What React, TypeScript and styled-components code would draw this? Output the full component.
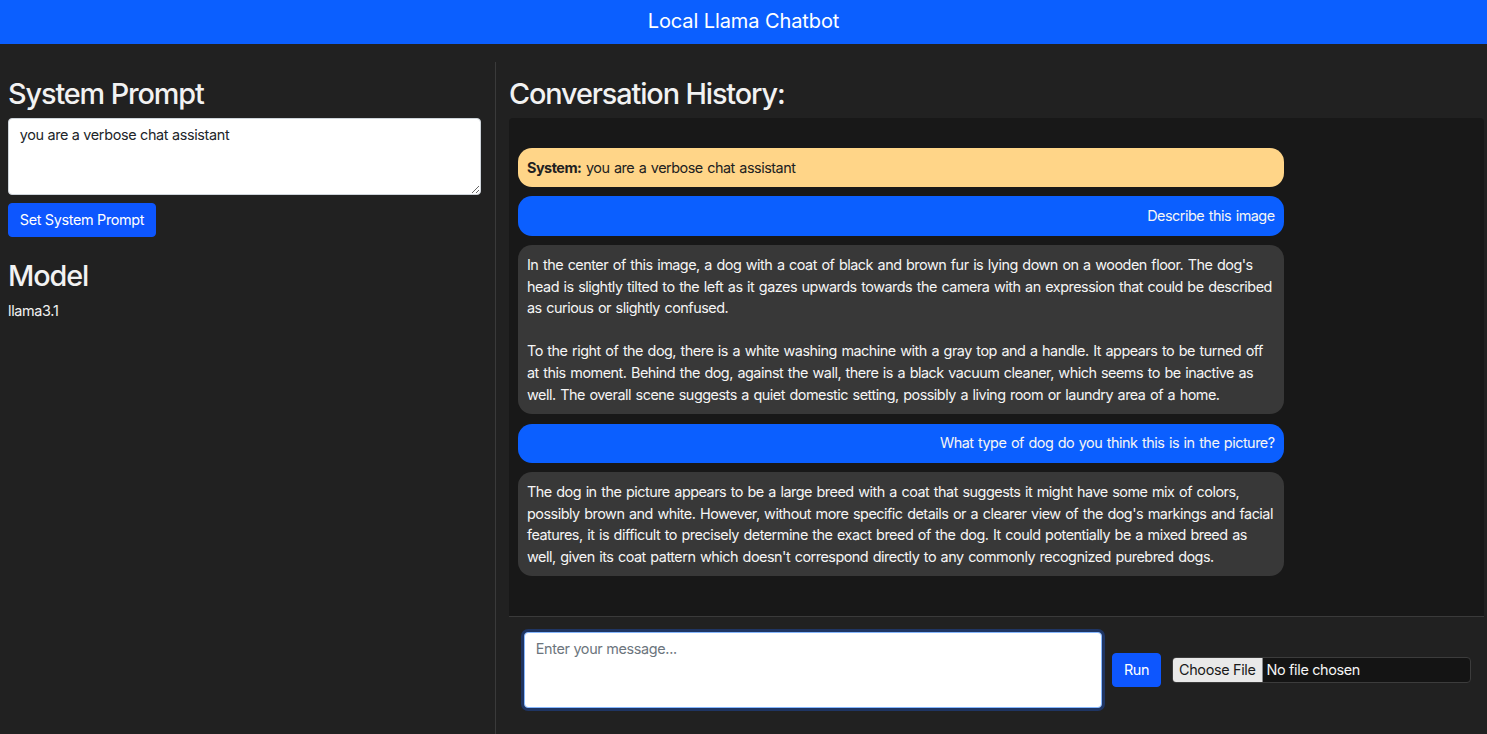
import React from "react";
import styled, { createGlobalStyle } from "styled-components";

const GlobalStyle = createGlobalStyle`
  html, body { margin: 0; padding: 0; }
  body {
    background: #212121;
    color: #f2f2f2;
    font-family: Inter, "Noto Sans", "Liberation Sans", sans-serif;
    font-size: 14.4px;
    line-height: 1.5;
    letter-spacing: -0.33px;
    overflow: hidden;
  }
  * { box-sizing: border-box; }
`;

const Header = styled.header`
  height: 44px;
  padding-bottom: 3px;
  background: #0b5fff;
  color: #ffffff;
  display: flex;
  align-items: center;
  justify-content: center;
  font-size: 20px;
  letter-spacing: -0.1px;
  font-weight: 400;
`;

const Main = styled.main`
  display: grid;
  grid-template-columns: 496px 1fr;
  height: calc(100vh - 44px);
  padding-top: 18px;
`;

const Sidebar = styled.aside`
  border-right: 1px solid #3a3a3a;
  padding: 14px 14px 0 8px;
`;

const Content = styled.section`
  display: flex;
  flex-direction: column;
  padding: 14px 3px 0 13px;
  min-height: 0;
`;

const Heading = styled.h2`
  margin: 0 0 7.2px;
  padding-top: 1px;
  height: 34.6px;
  font-size: 28.8px;
  line-height: 1.2;
  font-weight: 500;
  letter-spacing: -1.1px;
  color: #f2f2f2;
`;

const ModelHeading = styled(Heading)`
  margin-top: 21px;
`;

const PromptArea = styled.textarea`
  display: block;
  width: 100%;
  height: 77px;
  padding: 5.4px 10.8px;
  border: 1px solid #ced4da;
  border-radius: 4px;
  background: #ffffff;
  color: #212529;
  font: inherit;
  letter-spacing: inherit;
  resize: vertical;
  outline: none;
`;

const PrimaryButton = styled.button`
  display: inline-block;
  height: 34px;
  padding: 0 10.8px;
  border: 1px solid #0d56fe;
  border-radius: 4px;
  background: #0d56fe;
  color: #ffffff;
  font: inherit;
  letter-spacing: inherit;
  cursor: pointer;
  flex-shrink: 0;
`;

const SetButton = styled(PrimaryButton)`
  margin-top: 8px;
`;

const ModelName = styled.div`
  color: #f2f2f2;
`;

const ChatBox = styled.div`
  flex: 1;
  min-height: 0;
  background: #181818;
  border-radius: 4px 4px 0 0;
  padding: 30px 9px;
  display: flex;
  flex-direction: column;
  gap: 9.5px;
  overflow: hidden;
`;

const Bubble = styled.div<{ $role: "system" | "user" | "assistant" }>`
  width: 80%;
  padding: 8.8px 9px;
  border-radius: 14px;
  white-space: pre-wrap;
  letter-spacing: -0.49px;
  word-spacing: 1px;
  text-align: ${(p) => (p.$role === "user" ? "right" : "left")};
  background: ${(p) =>
    p.$role === "system" ? "#ffd588" : p.$role === "user" ? "#0b5fff" : "#383838"};
  color: ${(p) => (p.$role === "system" ? "#212121" : "#f5f5f5")};
`;

const Label = styled.strong`
  font-weight: 700;
`;

const InputRow = styled.div`
  border-top: 1px solid #3a3a3a;
  display: flex;
  align-items: center;
  gap: 10px;
  padding: 15px 13px 26px 15px;
`;

const MessageArea = styled.textarea`
  flex: 1;
  height: 76px;
  padding: 5.4px 10.8px;
  border: 1px solid #86b7fe;
  border-radius: 4px;
  box-shadow: 0 0 0 3px #1f3563;
  background: #ffffff;
  color: #212529;
  font: inherit;
  letter-spacing: inherit;
  resize: none;
  outline: none;
  &::placeholder { color: #6c757d; }
`;

const FilePicker = styled.label`
  display: flex;
  align-items: center;
  width: 299px;
  height: 26px;
  margin-left: 1px;
  background: #141414;
  border: 1px solid #3c3c3c;
  border-radius: 4px;
  overflow: hidden;
  cursor: pointer;
  input { display: none; }
`;

const FileButton = styled.span`
  height: 100%;
  display: flex;
  align-items: center;
  padding: 0 6px;
  background: #e9e9e9;
  color: #1a1a1a;
  border-right: 1px solid #8a8a8a;
`;

const FileStatus = styled.span`
  padding-left: 4px;
  color: #f5f5f5;
`;

const messages: { role: "system" | "user" | "assistant"; text: string }[] = [
  { role: "system", text: "you are a verbose chat assistant" },
  { role: "user", text: "Describe this image" },
  {
    role: "assistant",
    text:
      "In the center of this image, a dog with a coat of black and brown fur is lying down on a wooden floor. The dog's head is slightly tilted to the left as it gazes upwards towards the camera with an expression that could be described as curious or slightly confused.\n\nTo the right of the dog, there is a white washing machine with a gray top and a handle. It appears to be turned off at this moment. Behind the dog, against the wall, there is a black vacuum cleaner, which seems to be inactive as well. The overall scene suggests a quiet domestic setting, possibly a living room or laundry area of a home.",
  },
  { role: "user", text: "What type of dog do you think this is in the picture?" },
  {
    role: "assistant",
    text:
      "The dog in the picture appears to be a large breed with a coat that suggests it might have some mix of colors, possibly brown and white. However, without more specific details or a clearer view of the dog's markings and facial features, it is difficult to precisely determine the exact breed of the dog. It could potentially be a mixed breed as well, given its coat pattern which doesn't correspond directly to any commonly recognized purebred dogs.",
  },
];

export default function App() {
  return (
    <>
      <GlobalStyle />
      <Header>Local Llama Chatbot</Header>
      <Main>
        <Sidebar>
          <Heading>System Prompt</Heading>
          <PromptArea defaultValue="you are a verbose chat assistant" />
          <SetButton>Set System Prompt</SetButton>
          <ModelHeading>Model</ModelHeading>
          <ModelName>llama3.1</ModelName>
        </Sidebar>
        <Content>
          <Heading>Conversation History:</Heading>
          <ChatBox>
            {messages.map((m, i) => (
              <Bubble key={i} $role={m.role}>
                {m.role === "system" ? (
                  <>
                    <Label>System:</Label> {m.text}
                  </>
                ) : (
                  m.text
                )}
              </Bubble>
            ))}
          </ChatBox>
          <InputRow>
            <MessageArea placeholder="Enter your message..." />
            <PrimaryButton>Run</PrimaryButton>
            <FilePicker>
              <input type="file" />
              <FileButton>Choose File</FileButton>
              <FileStatus>No file chosen</FileStatus>
            </FilePicker>
          </InputRow>
        </Content>
      </Main>
    </>
  );
}
